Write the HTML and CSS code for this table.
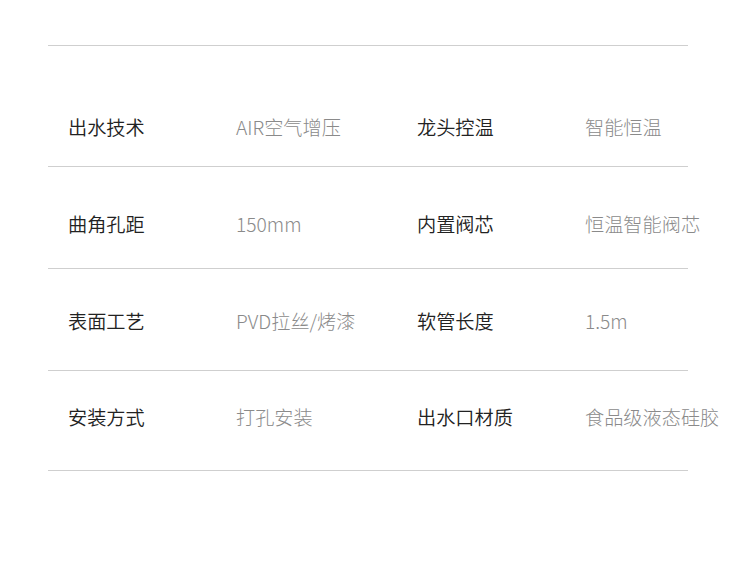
FILE: index.html
```html
<!DOCTYPE html>
<html lang="zh-CN">
<head>
<meta charset="utf-8">
<title>参数</title>
<link rel="stylesheet" href="styles.css">
</head>
<body>
<div class="spec">
  <div class="row r1">
    <span class="label">出水技术</span><span class="value">AIR空气增压</span>
    <span class="label">龙头控温</span><span class="value">智能恒温</span>
  </div>
  <div class="row r2">
    <span class="label">曲角孔距</span><span class="value">150mm</span>
    <span class="label">内置阀芯</span><span class="value">恒温智能阀芯</span>
  </div>
  <div class="row r3">
    <span class="label">表面工艺</span><span class="value">PVD拉丝/烤漆</span>
    <span class="label">软管长度</span><span class="value">1.5m</span>
  </div>
  <div class="row r4">
    <span class="label">安装方式</span><span class="value">打孔安装</span>
    <span class="label">出水口材质</span><span class="value">食品级液态硅胶</span>
  </div>
</div>
</body>
</html>
```
FILE: styles.css
```css
html, body {
  margin: 0;
  padding: 0;
  background: #ffffff;
}
body {
  font-family: "Noto Sans CJK SC", "Noto Sans", sans-serif;
  font-size: 19.2px;
  line-height: 24px;
}
.spec {
  margin: 45px 0 0 48px;
  width: 640px;
  border-top: 1px solid #cfcfcf;
}
.row {
  display: grid;
  grid-template-columns: 168px 181px 168px 120px;
  padding-left: 20px;
  border-bottom: 1px solid #cfcfcf;
  box-sizing: border-box;
  white-space: nowrap;
}
.r1 { padding-top: 69px; height: 121px; }
.r2 { padding-top: 45px; height: 102px; }
.r3 { padding-top: 40px; height: 102px; }
.r4 { padding-top: 34px; height: 100px; }
.label {
  color: #222222;
  font-weight: 350;
}
.value {
  color: #8a8a8a;
  font-weight: 300;
}
```
